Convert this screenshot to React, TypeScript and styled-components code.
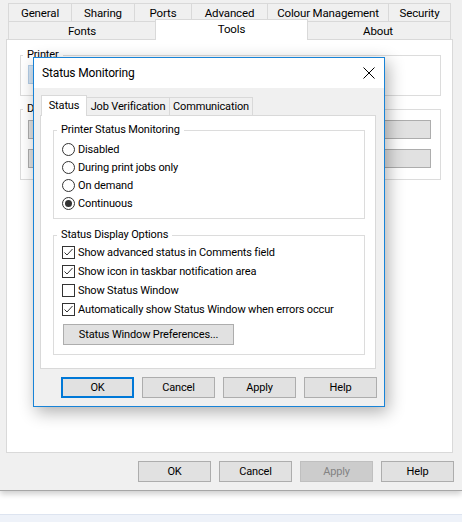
import React from "react";
import styled, { createGlobalStyle } from "styled-components";

const GlobalStyle = createGlobalStyle`
  html, body {
    margin: 0;
    padding: 0;
    background: #fff;
  }
  body {
    font-family: Roboto, "Liberation Sans", Arial, sans-serif;
    font-size: 11px;
    letter-spacing: -0.15px;
    color: #000;
  }
  * {
    box-sizing: border-box;
  }
`;

const Screen = styled.div`
  position: relative;
  width: 462px;
  height: 522px;
  overflow: hidden;
  display: flex;
  flex-direction: column;
`;

/* ---------- printer properties sheet (behind) ---------- */

const MainWindow = styled.div`
  position: relative;
  z-index: 1;
  display: flex;
  flex-direction: column;
  height: 491px;
  padding: 3px 0 8px;
  background: #f0f0f0;
  border-bottom: 1px solid #a6a6a6;
  box-shadow: 0 3px 6px rgba(0, 0, 0, 0.2);
`;

const TabRows = styled.div`
  position: relative;
  z-index: 2;
  display: flex;
  flex-direction: column;
  padding-left: 8px;
`;

const TabRow = styled.div`
  display: flex;
  align-items: flex-end;
  height: 18px;
`;

const SheetTab = styled.div<{ $w: number; $active?: boolean; $ml?: number }>`
  position: relative;
  z-index: ${(p) => (p.$active ? 2 : 1)};
  display: flex;
  align-items: center;
  justify-content: center;
  width: ${(p) => p.$w}px;
  height: ${(p) => (p.$active ? 21 : 18)}px;
  margin-left: ${(p) => p.$ml ?? -1}px;
  margin-bottom: ${(p) => (p.$active ? -1 : 0)}px;
  padding-bottom: ${(p) => (p.$active ? 3 : 0)}px;
  font-size: 11.5px;
  background: ${(p) => (p.$active ? "#fff" : "#f0f0f0")};
  border: 1px solid #d9d9d9;
  border-bottom: none;
  white-space: nowrap;
`;

const SheetPanel = styled.div`
  position: relative;
  z-index: 1;
  display: flex;
  flex-direction: column;
  width: 447px;
  height: 414px;
  margin-left: 6px;
  padding: 7px 11px 0 13px;
  background: #fff;
  border: 1px solid #d9d9d9;
`;

const Group = styled.fieldset<{ $pad: string; $mt?: number }>`
  display: flex;
  flex-direction: column;
  align-items: flex-start;
  min-width: 0;
  margin: ${(p) => p.$mt ?? 0}px 0 0;
  padding: ${(p) => p.$pad};
  border: 1px solid #dcdcdc;
`;

const Legend = styled.legend`
  margin-left: -5px;
  padding: 0 4px;
  line-height: 16px;
  white-space: nowrap;
`;

const PrinterField = styled.div`
  width: 120px;
  height: 19px;
  background: #d4e4f3;
  border: 1px solid #b3cde6;
`;

const GrayBar = styled.div<{ $mt?: number }>`
  align-self: stretch;
  height: 19px;
  margin-top: ${(p) => p.$mt ?? 0}px;
  background: #e1e1e1;
  border: 1px solid #adadad;
`;

const ButtonRow = styled.div<{ $mt: number; $mr?: number }>`
  display: flex;
  justify-content: flex-end;
  gap: 8px;
  margin-top: ${(p) => p.$mt}px;
  margin-right: ${(p) => p.$mr ?? 0}px;
`;

const PushButton = styled.button<{ $w?: number; $primary?: boolean; $mt?: number; $ml?: number }>`
  width: ${(p) => p.$w ?? 73}px;
  height: 21px;
  margin: ${(p) => p.$mt ?? 0}px 0 0 ${(p) => p.$ml ?? 0}px;
  padding: 0;
  font: inherit;
  letter-spacing: inherit;
  color: #000;
  background: #e1e1e1;
  border: ${(p) => (p.$primary ? "2px solid #0078d7" : "1px solid #adadad")};
  border-radius: 0;

  &:disabled {
    color: #838383;
    background: #cccccc;
    border-color: #bfbfbf;
  }
`;

/* ---------- status monitoring dialog ---------- */

const Dialog = styled.div`
  position: absolute;
  z-index: 5;
  left: 33px;
  top: 57px;
  width: 352px;
  height: 350px;
  display: flex;
  flex-direction: column;
  background: #f0f0f0;
  border: 1px solid #1883d7;
  box-shadow: 3px 5px 16px rgba(0, 0, 0, 0.32);
`;

const TitleBar = styled.div`
  display: flex;
  align-items: center;
  justify-content: space-between;
  height: 30px;
  padding: 0 9px 0 8px;
  background: #fff;
  font-size: 12px;
`;

const DialogBody = styled.div`
  display: flex;
  flex-direction: column;
  padding: 7px 8px 8px 6px;
`;

const TabStrip = styled.div`
  position: relative;
  z-index: 1;
  display: flex;
  align-items: flex-end;
  height: 20px;
  padding-left: 1px;
`;

const DialogTab = styled.div<{ $w: number; $active?: boolean; $first?: boolean }>`
  position: relative;
  z-index: ${(p) => (p.$active ? 2 : 1)};
  display: flex;
  align-items: center;
  justify-content: center;
  width: ${(p) => p.$w}px;
  height: ${(p) => (p.$active ? 21 : 18)}px;
  margin-left: ${(p) => (p.$first ? 0 : -1)}px;
  margin-bottom: ${(p) => (p.$active ? -1 : 0)}px;
  padding-bottom: ${(p) => (p.$active ? 2 : 0)}px;
  background: ${(p) => (p.$active ? "#fff" : "#f0f0f0")};
  border: 1px solid #d9d9d9;
  border-bottom: none;
  white-space: nowrap;
`;

const TabPanel = styled.div`
  display: flex;
  flex-direction: column;
  height: 254px;
  padding: 6px 10px 0 12px;
  background: #fff;
  border: 1px solid #d9d9d9;
`;

const OptionRow = styled.label<{ $h: number }>`
  display: flex;
  align-items: center;
  gap: 3px;
  height: ${(p) => p.$h}px;
  white-space: nowrap;
`;

const RadioMark = styled.span<{ $checked?: boolean }>`
  position: relative;
  flex: none;
  width: 13px;
  height: 13px;
  border: 1px solid #333;
  border-radius: 50%;
  background: #fff;

  &::after {
    content: "";
    display: ${(p) => (p.$checked ? "block" : "none")};
    position: absolute;
    left: 2px;
    top: 2px;
    width: 7px;
    height: 7px;
    border-radius: 50%;
    background: #333;
  }
`;

const CheckMark = styled.span`
  display: flex;
  flex: none;
  width: 13px;
  height: 13px;
  border: 1px solid #333;
  background: #fff;
`;

const Radio = ({ label, checked }: { label: string; checked?: boolean }) => (
  <OptionRow $h={18}>
    <RadioMark $checked={checked} />
    {label}
  </OptionRow>
);

const Check = ({ label, checked }: { label: string; checked?: boolean }) => (
  <OptionRow $h={19}>
    <CheckMark>
      {checked && (
        <svg width="11" height="11" viewBox="0 0 11 11">
          <path d="M1.5 5.5 L4 8 L9.5 2" fill="none" stroke="#333" strokeWidth="1" />
        </svg>
      )}
    </CheckMark>
    {label}
  </OptionRow>
);

const CloseIcon = () => (
  <svg width="12" height="12" viewBox="0 0 12 12">
    <path d="M0.5 0.5 L11.5 11.5 M11.5 0.5 L0.5 11.5" stroke="#000" strokeWidth="1" />
  </svg>
);

const BottomStrip = styled.div`
  height: 8px;
  margin-top: 23px;
  background: #eef2f9;
  border-top: 1px solid #dde4f0;
`;

export default function App() {
  return (
    <>
      <GlobalStyle />
      <Screen>
        <MainWindow>
          <TabRows>
            <TabRow>
              <SheetTab $w={64} $ml={0}>General</SheetTab>
              <SheetTab $w={64}>Sharing</SheetTab>
              <SheetTab $w={58}>Ports</SheetTab>
              <SheetTab $w={77}>Advanced</SheetTab>
              <SheetTab $w={122}>Colour Management</SheetTab>
              <SheetTab $w={63}>Security</SheetTab>
            </TabRow>
            <TabRow>
              <SheetTab $w={148} $ml={0}>Fonts</SheetTab>
              <SheetTab $w={153} $active>Tools</SheetTab>
              <SheetTab $w={146} $ml={-3}>About</SheetTab>
            </TabRow>
          </TabRows>

          <SheetPanel>
            <Group $pad="2px 9px 11px 7px">
              <Legend>Printer</Legend>
              <PrinterField />
            </Group>
            <Group $pad="3px 9px 11px 7px" $mt={5}>
              <Legend>Defaults</Legend>
              <GrayBar />
              <GrayBar $mt={10} />
            </Group>
          </SheetPanel>

          <ButtonRow $mt={8} $mr={8}>
            <PushButton>OK</PushButton>
            <PushButton>Cancel</PushButton>
            <PushButton disabled>Apply</PushButton>
            <PushButton>Help</PushButton>
          </ButtonRow>
        </MainWindow>

        <BottomStrip />

        <Dialog>
          <TitleBar>
            <span>Status Monitoring</span>
            <CloseIcon />
          </TitleBar>
          <DialogBody>
            <TabStrip>
              <DialogTab $w={46} $active $first>Status</DialogTab>
              <DialogTab $w={84}>Job Verification</DialogTab>
              <DialogTab $w={84}>Communication</DialogTab>
            </TabStrip>
            <TabPanel>
              <Group $pad="2px 8px 6px 8px">
                <Legend>Printer Status Monitoring</Legend>
                <Radio label="Disabled" />
                <Radio label="During print jobs only" />
                <Radio label="On demand" />
                <Radio label="Continuous" checked />
              </Group>
              <Group $pad="0 8px 9px 8px" $mt={8}>
                <Legend>Status Display Options</Legend>
                <Check label="Show advanced status in Comments field" checked />
                <Check label="Show icon in taskbar notification area" checked />
                <Check label="Show Status Window" />
                <Check label="Automatically show Status Window when errors occur" checked />
                <PushButton $w={171} $mt={5} $ml={1}>
                  Status Window Preferences...
                </PushButton>
              </Group>
            </TabPanel>
            <ButtonRow $mt={8} $mr={-1}>
              <PushButton $primary>OK</PushButton>
              <PushButton>Cancel</PushButton>
              <PushButton>Apply</PushButton>
              <PushButton>Help</PushButton>
            </ButtonRow>
          </DialogBody>
        </Dialog>
      </Screen>
    </>
  );
}
